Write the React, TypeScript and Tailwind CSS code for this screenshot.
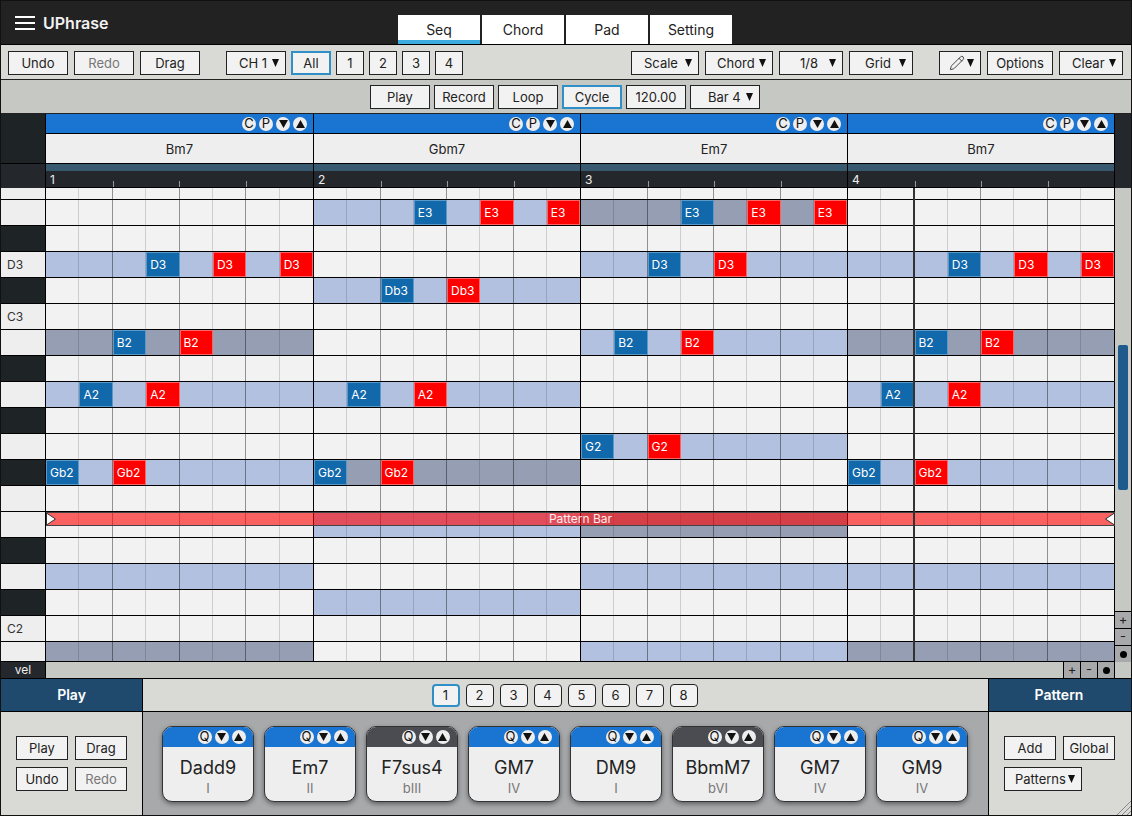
import React from 'react';
import { Pencil } from 'lucide-react';

type Row = {
  name: string;
  black?: boolean;
  label?: boolean;
  h?: string;
  fill?: string;
  blue?: number[];
  red?: number[];
};

// fill has one char per bar: l = light, d = dark, . = none
const rows: Row[] = [
  { name: 'F3', h: 'h-[12px]' },
  { name: 'E3', fill: '.ld.', blue: [11, 19], red: [13, 15, 21, 23] },
  { name: 'Eb3', black: true },
  { name: 'D3', label: true, fill: 'l.ll', blue: [3, 18, 27], red: [5, 7, 20, 29, 31] },
  { name: 'Db3', black: true, fill: '.l..', blue: [10], red: [12] },
  { name: 'C3', label: true },
  { name: 'B2', fill: 'd.ld', blue: [2, 17, 26], red: [4, 19, 28] },
  { name: 'Bb2', black: true },
  { name: 'A2', fill: 'll.l', blue: [1, 9, 25], red: [3, 11, 27] },
  { name: 'Ab2', black: true },
  { name: 'G2', fill: '..l.', blue: [16], red: [18] },
  { name: 'Gb2', black: true, fill: 'ld.l', blue: [0, 8, 24], red: [2, 10, 26] },
  { name: 'F2' },
  { name: 'E2', fill: '.ld.' },
  { name: 'Eb2', black: true },
  { name: 'D2', fill: 'l.ll' },
  { name: 'Db2', black: true, fill: '.l..' },
  { name: 'C2', label: true },
  { name: 'B1', h: 'h-[20px]', fill: 'd.ld' },
];

const bars = ['Bm7', 'Gbm7', 'Em7', 'Bm7'];
const barSteps = [0, 1, 2, 3, 4, 5, 6, 7];

const pads = [
  { name: 'Dadd9', sub: 'I', head: 'bg-[#1a75d2]' },
  { name: 'Em7', sub: 'II', head: 'bg-[#1a75d2]' },
  { name: 'F7sus4', sub: 'bIII', head: 'bg-[#4a4c51]' },
  { name: 'GM7', sub: 'IV', head: 'bg-[#1a75d2]' },
  { name: 'DM9', sub: 'I', head: 'bg-[#1a75d2]' },
  { name: 'BbmM7', sub: 'bVI', head: 'bg-[#4a4c51]' },
  { name: 'GM7', sub: 'IV', head: 'bg-[#1a75d2]' },
  { name: 'GM9', sub: 'IV', head: 'bg-[#1a75d2]' },
];

const Tri = ({ up, className = 'w-[7px] h-[8px]' }: { up?: boolean; className?: string }) => (
  <svg viewBox="0 0 8 9" preserveAspectRatio="none" className={`shrink-0 ${className}`}>
    <polygon points={up ? '4,0 8,9 0,9' : '0,0 8,0 4,9'} fill="#111" />
  </svg>
);

const Btn = ({ w, children, muted, active }: { w: string; children: React.ReactNode; muted?: boolean; active?: boolean }) => (
  <div
    className={`${w} h-[24px] shrink-0 flex items-center justify-center pt-[2px] bg-[#f2f2f2] text-[13px] ${
      active ? 'border-2 border-[#2f8fc6]' : 'border border-[#222]'
    } ${muted ? 'text-[#777]' : 'text-[#222]'}`}
  >
    {children}
  </div>
);

const Drop = ({ w, pl, label }: { w: string; pl: string; label: string }) => (
  <div className={`${w} ${pl} h-[24px] shrink-0 flex items-center pr-[6px] bg-[#f2f2f2] border border-[#222] text-[13px] text-[#222]`}>
    <span className="pt-[2px]">{label}</span>
    <Tri className="ml-auto w-[7px] h-[8px]" />
  </div>
);

const Circle = ({ children }: { children: React.ReactNode }) => (
  <div className="w-[14px] h-[14px] rounded-full bg-[#eee] flex items-center justify-center text-[13px] leading-none text-[#111]">
    {children}
  </div>
);

const SmallTri = ({ up }: { up?: boolean }) => <Tri up={up} className="w-[9px] h-[8px]" />;

const Cell = ({ step, row }: { step: number; row: Row }) => {
  const f = row.fill ? row.fill[Math.floor(step / 8)] : '.';
  const isBlue = row.blue?.includes(step);
  const isRed = row.red?.includes(step);
  const end = step % 8 === 7;
  const line = end ? '' : step % 2 === 1 ? 'border-r border-black/40' : 'border-r border-black/15';
  if (isBlue || isRed) {
    return (
      <div
        className={`border flex items-center pl-[3px] pt-[1px] text-[12px] text-white overflow-hidden ${
          isBlue ? 'bg-[#1168aa] border-[#5a9ac8]' : 'bg-[#ff0000] border-[#ff6464]'
        }`}
      >
        {row.name}
      </div>
    );
  }
  return <div className={`${line} ${f === 'l' ? 'bg-[#b3c1e1]' : f === 'd' ? 'bg-[#969eb4]' : ''}`} />;
};

export default function App() {
  return (
    <div className="w-[1132px] h-[816px] border border-[#111] bg-[#222] flex flex-col overflow-hidden font-['Inter',sans-serif]">
      {/* title */}
      <div className="h-[44px] shrink-0 flex border-b border-black bg-[#222] relative">
        <div className="flex items-center pl-[14px] gap-[8px] h-[44px] w-[397px]">
          <div className="w-[20px] flex flex-col gap-[4px]">
            <div className="h-[2px] bg-white" />
            <div className="h-[2px] bg-white" />
            <div className="h-[2px] bg-white" />
          </div>
          <span className="text-[16px] font-semibold text-[#f2f2f2]">UPhrase</span>
        </div>
        <div className="flex gap-[2px] pt-[14px]">
          {['Seq', 'Chord', 'Pad', 'Setting'].map((t, i) => (
            <div key={t} className="w-[82px] h-[29px] bg-white text-[14px] text-[#222] flex items-center justify-center relative">
              {t}
              {i === 0 && <div className="absolute left-0 right-0 bottom-0 h-[4px] bg-[#3dade0]" />}
            </div>
          ))}
        </div>
      </div>

      {/* toolbar 1 */}
      <div className="h-[35px] shrink-0 flex items-center bg-[#d9dad5] border-b border-[#222] pl-[7px] pt-[2px]">
        <div className="flex gap-[6px]">
          <Btn w="w-[60px]">Undo</Btn>
          <Btn w="w-[60px]" muted>Redo</Btn>
          <Btn w="w-[60px]">Drag</Btn>
        </div>
        <div className="flex gap-[5px] ml-[26px]">
          <Drop w="w-[60px]" pl="pl-[12px]" label="CH 1" />
          <Btn w="w-[40px]" active>All</Btn>
          {['1', '2', '3', '4'].map((c) => (
            <Btn key={c} w="w-[28px]">{c}</Btn>
          ))}
        </div>
        <div className="flex gap-[6px] ml-[168px]">
          <Drop w="w-[68px]" pl="pl-[12px]" label="Scale" />
          <Drop w="w-[68px]" pl="pl-[11px]" label="Chord" />
          <Drop w="w-[64px]" pl="pl-[20px]" label="1/8" />
          <Drop w="w-[64px]" pl="pl-[15px]" label="Grid" />
        </div>
        <div className="flex gap-[6px] ml-[26px]">
          <div className="w-[42px] h-[24px] flex items-center justify-between pl-[9px] pr-[6px] bg-[#f2f2f2] border border-[#222]">
            <Pencil size={16} strokeWidth={1.25} color="#222" />
            <Tri />
          </div>
          <Btn w="w-[66px]">Options</Btn>
          <Drop w="w-[64px]" pl="pl-[12px]" label="Clear" />
        </div>
      </div>

      {/* toolbar 2 */}
      <div className="h-[34px] shrink-0 flex items-center bg-[#c6c8c4] border-b border-[#222] pl-[369px] pt-[1px]">
        <div className="flex gap-[4px]">
          <Btn w="w-[60px]">Play</Btn>
          <Btn w="w-[60px]">Record</Btn>
          <Btn w="w-[60px]">Loop</Btn>
          <Btn w="w-[60px]" active>Cycle</Btn>
          <Btn w="w-[60px]">120.00</Btn>
          <Drop w="w-[70px]" pl="pl-[17px]" label="Bar 4" />
        </div>
      </div>

      {/* bar headers */}
      <div className="flex shrink-0 bg-[#24282c]">
        <div className="w-[45px] shrink-0 flex flex-col border-r border-black">
          <div className="h-[50px] bg-[#1e2326] border-b border-black" />
          <div className="h-[24px] bg-[#24282c]" />
        </div>
        <div className="w-[1069px] grid grid-cols-[268px_267px_267px_267px] shrink-0">
          {bars.map((b, i) => (
            <div key={i} className="flex flex-col border-r border-black">
              <div className="h-[20px] bg-[#1a75d2] border-b border-black flex items-center justify-end gap-[3px] pr-[6px]">
                <Circle>C</Circle>
                <Circle>P</Circle>
                <Circle><SmallTri /></Circle>
                <Circle><SmallTri up /></Circle>
              </div>
              <div className="h-[30px] bg-[#eee] border-b border-black flex items-center justify-center pt-[2px] text-[13px] text-[#222]">{b}</div>
              <div className="h-[7px] bg-[#385a70]" />
              <div className="h-[17px] bg-[#24282c] border-b border-black flex relative">
                <span className="pl-[4px] pt-[1px] text-[12px] leading-[16px] text-[#eee] w-[66.5px]">{i + 1}</span>
                <div className="h-[6px] w-[66.5px] self-end border-l border-[#999]" />
                <div className="h-[6px] w-[66.5px] self-end border-l border-[#999]" />
                <div className="h-[6px] self-end border-l border-[#999]" />
              </div>
            </div>
          ))}
        </div>
        <div className="flex-1 bg-[#24282c]" />
      </div>

      {/* piano roll */}
      <div className="flex shrink-0 relative">
        <div className="w-[1114px] shrink-0 flex flex-col">
          {rows.map((r) => (
            <div key={r.name} className={`flex border-b border-black ${r.h ?? 'h-[26px]'}`}>
              <div
                className={`w-[45px] shrink-0 border-r border-black flex items-center pl-[6px] pt-[1px] text-[12px] text-[#333] ${
                  r.black ? 'bg-[#1e2326]' : 'bg-[#eee]'
                }`}
              >
                {r.label ? r.name : ''}
              </div>
              <div className="w-[1069px] grid grid-cols-[268px_267px_267px_267px] bg-[#f2f2f2]">
                {bars.map((_, b) => (
                  <div key={b} className="grid grid-cols-8 border-r border-black">
                    {barSteps.map((s) => (
                      <Cell key={s} step={b * 8 + s} row={r} />
                    ))}
                  </div>
                ))}
              </div>
            </div>
          ))}
        </div>
        <div className="flex-1 flex flex-col bg-[#c6c8c4]">
          <div className="mt-[157px] mx-[3px] h-[145px] rounded-[2px] bg-[#1f5a8c]" />
          <div className="mt-auto flex flex-col">
            <div className="h-[17px] bg-[#a8a9ab] border-t border-black flex items-center justify-center text-[13px] text-[#222]">+</div>
            <div className="h-[17px] bg-[#a8a9ab] border-t border-black flex items-center justify-center text-[13px] text-[#222]">-</div>
            <div className="h-[17px] bg-[#a8a9ab] border-t border-black flex items-center justify-center">
              <div className="w-[7px] h-[7px] rounded-full bg-black" />
            </div>
          </div>
        </div>

        {/* pattern bar */}
        <div className="absolute left-[45px] top-[324px] w-[1069px] h-[14px] bg-[#ff0000]/60 border-y border-[#444] flex items-center justify-center text-[12px] text-white/90">
          <span>Pattern Bar</span>
          <svg viewBox="0 0 10 12" className="absolute left-0 top-0 w-[10px] h-[12px]">
            <polygon points="0.5,0 9.5,6 0.5,12" fill="#fff" stroke="#333" strokeWidth="1" />
          </svg>
          <svg viewBox="0 0 10 12" className="absolute right-0 top-0 w-[10px] h-[12px]">
            <polygon points="9.5,0 0.5,6 9.5,12" fill="#fff" stroke="#333" strokeWidth="1" />
          </svg>
        </div>
        {/* playhead */}
        <div className="absolute left-[912px] top-0 w-[2px] h-[473px] bg-[#333]" />
      </div>

      {/* velocity */}
      <div className="h-[17px] shrink-0 flex bg-[#c6c8c4] border-b border-black">
        <div className="w-[45px] bg-[#24282c] text-[#eee] text-[12px] flex items-center justify-center border-r border-black">vel</div>
        <div className="w-[1017px]" />
        <div className="w-[17px] bg-[#a8a9ab] border-l border-black flex items-center justify-center text-[13px] text-[#222]">+</div>
        <div className="w-[17px] bg-[#a8a9ab] border-l border-black flex items-center justify-center text-[13px] text-[#222]">-</div>
        <div className="w-[18px] bg-[#a8a9ab] border-x border-black flex items-center justify-center">
          <div className="w-[7px] h-[7px] rounded-full bg-black" />
        </div>
      </div>

      {/* bottom */}
      <div className="flex-1 flex bg-[#d9dad5] min-h-0">
        <div className="w-[142px] shrink-0 flex flex-col border-r border-black">
          <div className="h-[33px] bg-[#1f4a6e] border-b border-black flex items-center justify-center pb-[1px] text-[14px] font-semibold text-white">Play</div>
          <div className="flex-1 grid grid-cols-[52px_52px] gap-x-[7px] gap-y-[7px] content-center justify-center">
            <Btn w="w-[52px]">Play</Btn>
            <Btn w="w-[52px]">Drag</Btn>
            <Btn w="w-[52px]">Undo</Btn>
            <Btn w="w-[52px]" muted>Redo</Btn>
          </div>
        </div>
        <div className="flex-1 flex flex-col">
          <div className="h-[33px] border-b border-black flex items-center justify-center gap-[6px] pt-[1px] pr-[2px]">
            {['1', '2', '3', '4', '5', '6', '7', '8'].map((p, i) => (
              <div
                key={p}
                className={`w-[28px] h-[23px] rounded-[4px] bg-[#f2f2f2] flex items-center justify-center text-[13px] text-[#222] ${
                  i === 0 ? 'border-2 border-[#2f8fc6]' : 'border border-[#222]'
                }`}
              >
                {p}
              </div>
            ))}
          </div>
          <div className="flex-1 bg-[#a8a9ab] flex items-center justify-center gap-[10px] pr-[2px]">
            {pads.map((p, i) => (
              <div key={i} className="w-[92px] h-[76px] rounded-[10px] border border-[#333] bg-[#eee] overflow-hidden flex flex-col shadow-[0_2px_5px_rgba(0,0,0,0.45)]">
                <div className={`h-[20px] shrink-0 ${p.head} flex items-center justify-end gap-[3px] pr-[7px]`}>
                  <Circle>Q</Circle>
                  <Circle><SmallTri /></Circle>
                  <Circle><SmallTri up /></Circle>
                </div>
                <div className="flex-1 flex flex-col items-center pt-[10px] pl-[1px]">
                  <span className="text-[18px] leading-[22px] text-[#222]">{p.name}</span>
                  <span className="text-[13px] leading-[18px] text-[#777]">{p.sub}</span>
                </div>
              </div>
            ))}
          </div>
        </div>
        <div className="w-[143px] shrink-0 flex flex-col border-l border-black relative">
          <div className="h-[33px] bg-[#1f4a6e] border-b border-black flex items-center justify-center pb-[1px] pr-[2px] text-[14px] font-semibold text-white">Pattern</div>
          <div className="flex-1 flex flex-col justify-center gap-[7px] pl-[15px]">
            <div className="flex gap-[7px]">
              <Btn w="w-[52px]">Add</Btn>
              <Btn w="w-[52px]">Global</Btn>
            </div>
            <Drop w="w-[78px]" pl="pl-[10px]" label="Patterns" />
          </div>
          <svg viewBox="0 0 14 14" className="absolute right-0 bottom-0 w-[14px] h-[14px]">
            <path d="M0 14L14 0M5 14L14 5M10 14L14 10" stroke="#888" strokeWidth="1" fill="none" />
          </svg>
        </div>
      </div>
    </div>
  );
}
